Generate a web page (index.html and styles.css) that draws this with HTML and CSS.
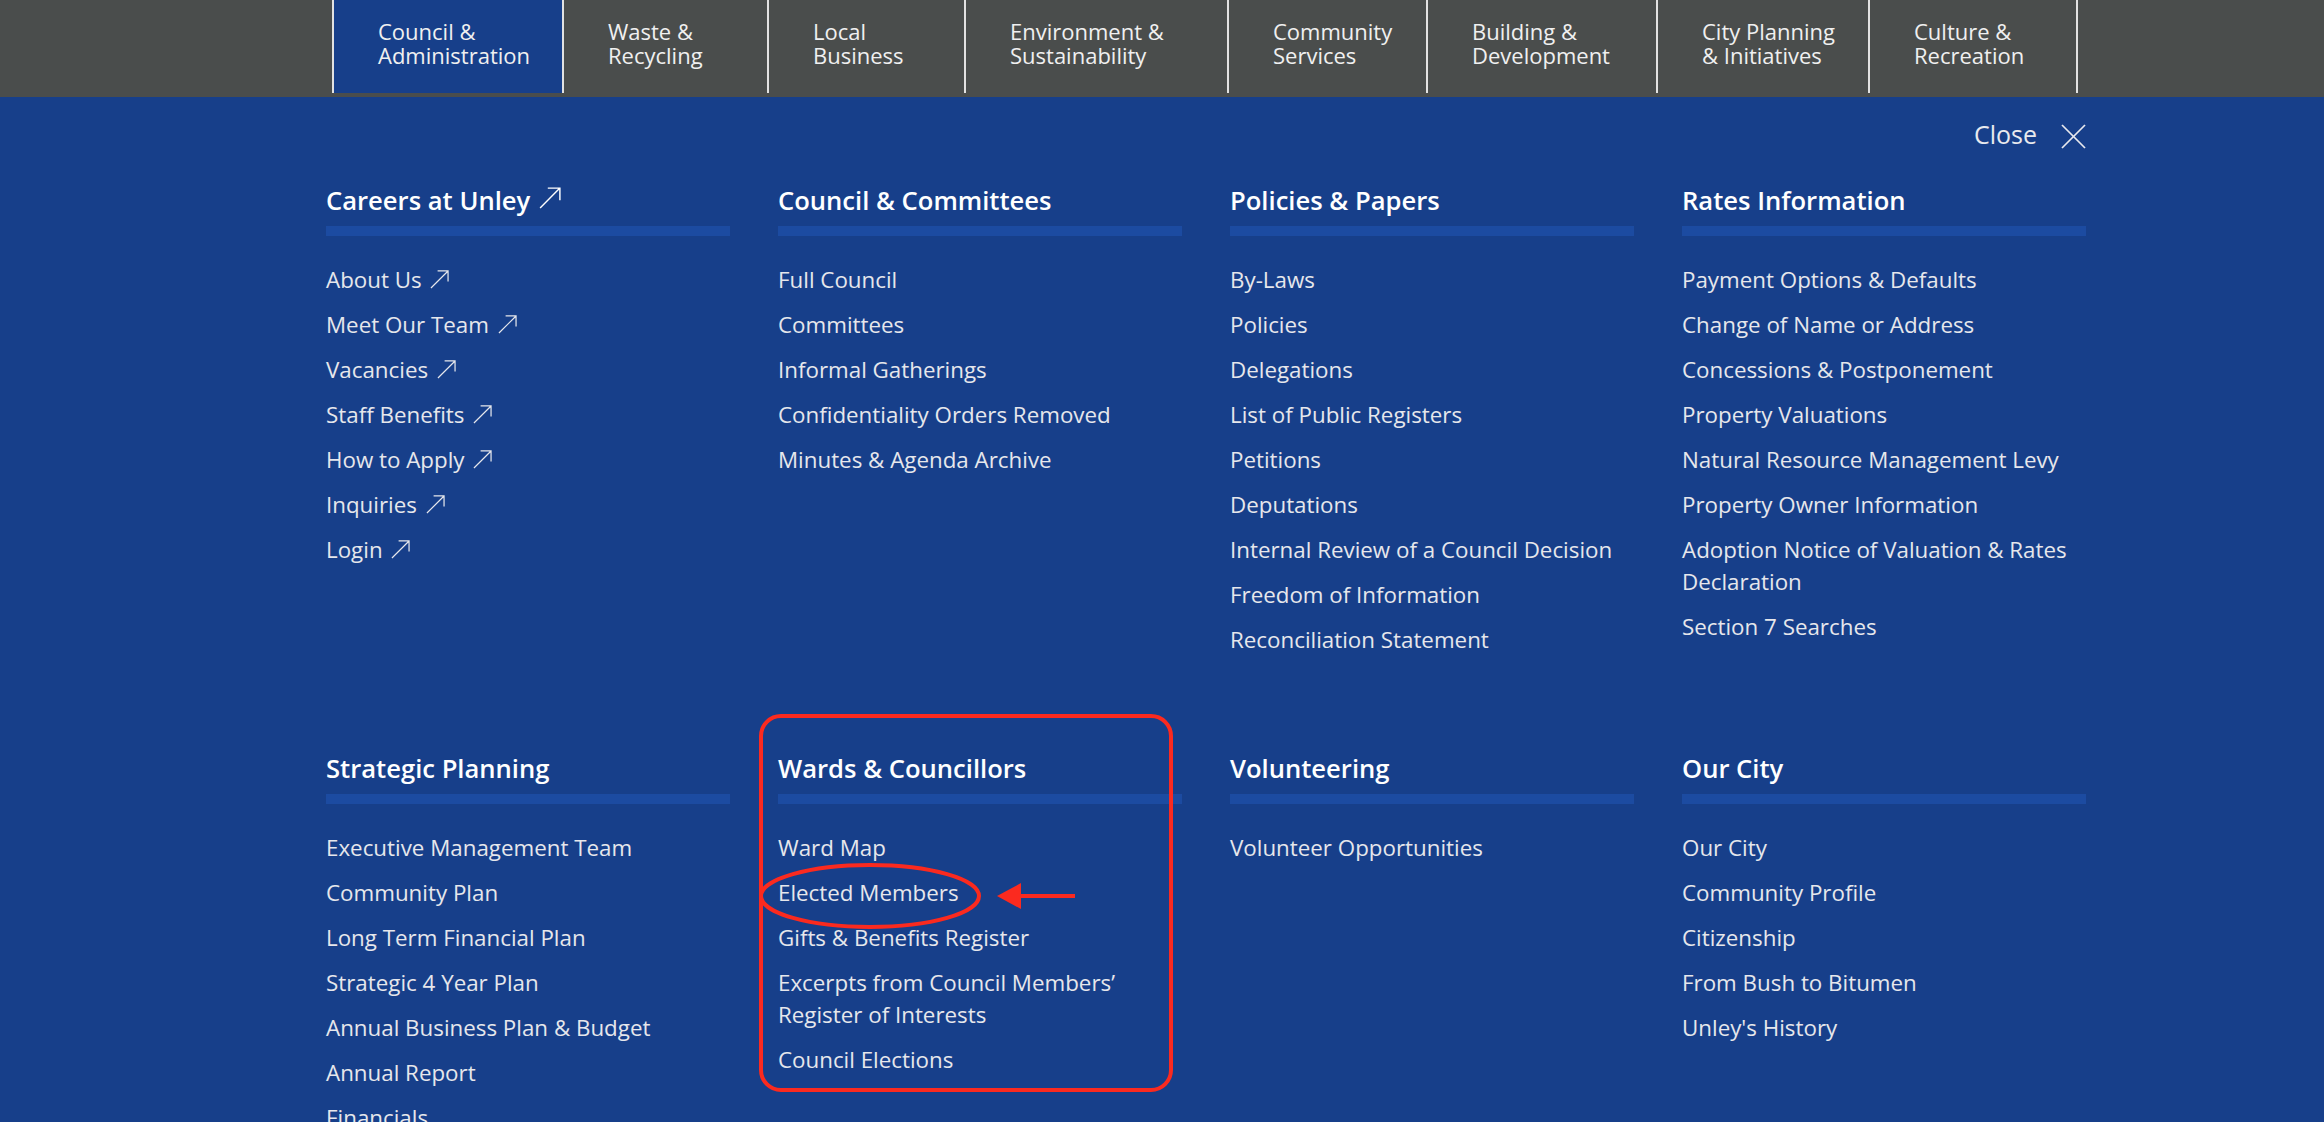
FILE: index.html
```html
<!DOCTYPE html>
<html lang="en">
<head>
<meta charset="utf-8">
<title>City of Unley – Council &amp; Administration</title>
<link rel="stylesheet" href="styles.css">
</head>
<body>
<nav class="topnav">
  <ul class="tabs">
    <li class="tab tab--active">Council &amp;<br>Administration</li>
    <li class="tab">Waste &amp;<br>Recycling</li>
    <li class="tab">Local<br>Business</li>
    <li class="tab">Environment &amp;<br>Sustainability</li>
    <li class="tab">Community<br>Services</li>
    <li class="tab">Building &amp;<br>Development</li>
    <li class="tab">City Planning<br>&amp; Initiatives</li>
    <li class="tab">Culture &amp;<br>Recreation</li>
  </ul>
</nav>

<section class="megamenu">
  <div class="megamenu__inner">
    <div class="close-row">
      <span class="close">Close
        <svg class="close__icon" viewBox="0 0 25 25" width="25" height="25" aria-hidden="true">
          <line x1="1" y1="1" x2="24" y2="24"/>
          <line x1="24" y1="1" x2="1" y2="24"/>
        </svg>
      </span>
    </div>

    <div class="menu-grid">
      <div class="menu-col">
        <h2 class="menu-col__title">Careers at Unley <svg class="ext ext--lg" viewBox="0 0 20 20" aria-hidden="true"><path d="M1 19 L19 1 M8 1 H19 V12"/></svg></h2>
        <ul class="menu-col__list">
          <li>About Us <svg class="ext" viewBox="0 0 20 20" aria-hidden="true"><path d="M1 19 L19 1 M8 1 H19 V12"/></svg></li>
          <li>Meet Our Team <svg class="ext" viewBox="0 0 20 20" aria-hidden="true"><path d="M1 19 L19 1 M8 1 H19 V12"/></svg></li>
          <li>Vacancies <svg class="ext" viewBox="0 0 20 20" aria-hidden="true"><path d="M1 19 L19 1 M8 1 H19 V12"/></svg></li>
          <li>Staff Benefits <svg class="ext" viewBox="0 0 20 20" aria-hidden="true"><path d="M1 19 L19 1 M8 1 H19 V12"/></svg></li>
          <li>How to Apply <svg class="ext" viewBox="0 0 20 20" aria-hidden="true"><path d="M1 19 L19 1 M8 1 H19 V12"/></svg></li>
          <li>Inquiries <svg class="ext" viewBox="0 0 20 20" aria-hidden="true"><path d="M1 19 L19 1 M8 1 H19 V12"/></svg></li>
          <li>Login <svg class="ext" viewBox="0 0 20 20" aria-hidden="true"><path d="M1 19 L19 1 M8 1 H19 V12"/></svg></li>
        </ul>
      </div>

      <div class="menu-col">
        <h2 class="menu-col__title">Council &amp; Committees</h2>
        <ul class="menu-col__list">
          <li>Full Council</li>
          <li>Committees</li>
          <li>Informal Gatherings</li>
          <li>Confidentiality Orders Removed</li>
          <li>Minutes &amp; Agenda Archive</li>
        </ul>
      </div>

      <div class="menu-col">
        <h2 class="menu-col__title">Policies &amp; Papers</h2>
        <ul class="menu-col__list">
          <li>By-Laws</li>
          <li>Policies</li>
          <li>Delegations</li>
          <li>List of Public Registers</li>
          <li>Petitions</li>
          <li>Deputations</li>
          <li>Internal Review of a Council Decision</li>
          <li>Freedom of Information</li>
          <li>Reconciliation Statement</li>
        </ul>
      </div>

      <div class="menu-col">
        <h2 class="menu-col__title">Rates Information</h2>
        <ul class="menu-col__list">
          <li>Payment Options &amp; Defaults</li>
          <li>Change of Name or Address</li>
          <li>Concessions &amp; Postponement</li>
          <li>Property Valuations</li>
          <li>Natural Resource Management Levy</li>
          <li>Property Owner Information</li>
          <li>Adoption Notice of Valuation &amp; Rates Declaration</li>
          <li>Section 7 Searches</li>
        </ul>
      </div>

      <div class="menu-col">
        <h2 class="menu-col__title">Strategic Planning</h2>
        <ul class="menu-col__list">
          <li>Executive Management Team</li>
          <li>Community Plan</li>
          <li>Long Term Financial Plan</li>
          <li>Strategic 4 Year Plan</li>
          <li>Annual Business Plan &amp; Budget</li>
          <li>Annual Report</li>
          <li>Financials</li>
        </ul>
      </div>

      <div class="menu-col menu-col--highlight">
        <h2 class="menu-col__title">Wards &amp; Councillors</h2>
        <ul class="menu-col__list">
          <li>Ward Map</li>
          <li>Elected Members</li>
          <li>Gifts &amp; Benefits Register</li>
          <li>Excerpts from Council Members’ Register of Interests</li>
          <li>Council Elections</li>
        </ul>
        <svg class="annotation" viewBox="0 0 414 378" width="414" height="378" aria-hidden="true">
          <rect x="2" y="2" width="410" height="374" rx="20" ry="20"/>
          <ellipse cx="111" cy="182" rx="109" ry="31"/>
          <line x1="258" y1="182" x2="316" y2="182"/>
          <polygon class="annotation__head" points="238,182 262,169 262,195"/>
        </svg>
      </div>

      <div class="menu-col">
        <h2 class="menu-col__title">Volunteering</h2>
        <ul class="menu-col__list">
          <li>Volunteer Opportunities</li>
        </ul>
      </div>

      <div class="menu-col">
        <h2 class="menu-col__title">Our City</h2>
        <ul class="menu-col__list">
          <li>Our City</li>
          <li>Community Profile</li>
          <li>Citizenship</li>
          <li>From Bush to Bitumen</li>
          <li>Unley's History</li>
        </ul>
      </div>
    </div>
  </div>
</section>
</body>
</html>
```

FILE: styles.css
```css
html, body {
  margin: 0;
  padding: 0;
  height: 1122px;
  overflow: hidden;
}

body {
  background: #173f8a;
  font-family: "Open Sans", "Noto Sans", "Liberation Sans", sans-serif;
  color: #e8e9ee;
}

/* ---------- top navigation ---------- */
.topnav {
  background: #4a4d4c;
  height: 97px;
  box-sizing: border-box;
  padding-bottom: 4px;
}

.tabs {
  list-style: none;
  margin: 0 0 0 332px;
  padding: 0;
  display: flex;
  height: 93px;
}

.tab {
  box-sizing: border-box;
  height: 93px;
  border-left: 2px solid #e2e2e2;
  padding: 19px 0 0 44px;
  font-size: 22px;
  line-height: 24px;
  color: #f0f0f0;
  white-space: nowrap;
}

.tab:last-child { border-right: 2px solid #e2e2e2; }
.tab--active { background: #173f8a; }

.tab:nth-child(1) { width: 230px; }
.tab:nth-child(2) { width: 205px; }
.tab:nth-child(3) { width: 197px; }
.tab:nth-child(4) { width: 263px; }
.tab:nth-child(5) { width: 199px; }
.tab:nth-child(6) { width: 230px; }
.tab:nth-child(7) { width: 212px; }
.tab:nth-child(8) { width: 210px; }

/* ---------- mega menu ---------- */
.megamenu__inner {
  margin-left: 326px;
  width: 1760px;
  padding-top: 22px;
}

.close-row {
  display: flex;
  justify-content: flex-end;
}

.close {
  display: flex;
  align-items: center;
  gap: 24px;
  font-size: 25px;
  line-height: 30px;
  color: #e8e9ee;
}

.close__icon {
  display: block;
  margin-top: 5px;
  stroke: #e8e9ee;
  stroke-width: 1.7;
  fill: none;
}

.menu-grid {
  margin-top: 34px;
  display: grid;
  grid-template-columns: repeat(4, 404px);
  column-gap: 48px;
  row-gap: 95px;
  align-items: start;
}

.menu-col {
  position: relative;
}

.menu-col__title {
  margin: 0;
  font-size: 25.6px;
  line-height: 34px;
  font-weight: 600;
  color: #ffffff;
  padding-top: 1px;
  padding-bottom: 8px;
  border-bottom: 10px solid #1c4ba1;
  display: flex;
  align-items: center;
  gap: 9px;
}

.menu-col__list {
  list-style: none;
  margin: 28px 0 0;
  padding: 0;
  display: flex;
  flex-direction: column;
  gap: 13px;
  font-size: 22.35px;
  line-height: 32px;
  color: #e6e7ec;
}

.menu-col__list li {
  margin: 0;
}

.ext {
  width: 19px;
  height: 19px;
  margin-left: 3px;
  vertical-align: -1px;
  fill: none;
  stroke: #e6e7ec;
  stroke-width: 1.3;
}

.ext--lg {
  width: 22px;
  height: 22px;
  margin: -6px 0 0;
  stroke: #ffffff;
}

/* ---------- red annotation overlay ---------- */
.annotation {
  position: absolute;
  left: -19px;
  top: -37px;
  overflow: visible;
  pointer-events: none;
}

.annotation rect,
.annotation ellipse,
.annotation line {
  fill: none;
  stroke: #fb2a1f;
  stroke-width: 4;
}

.annotation__head {
  fill: #fb2a1f;
  stroke: none;
}
```
